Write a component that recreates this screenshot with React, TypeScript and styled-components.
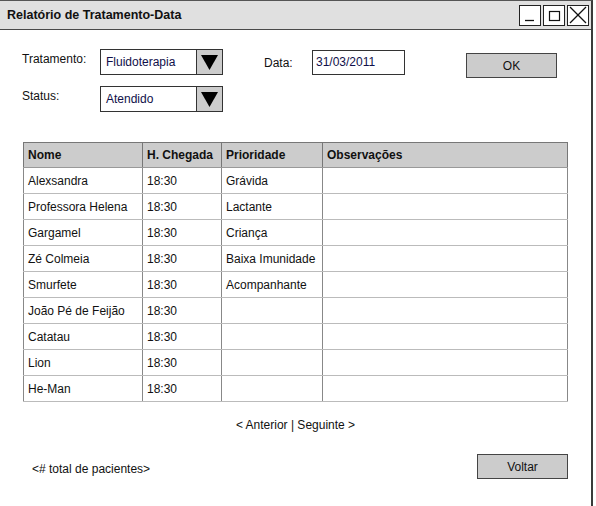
import React from "react";
import styled, { createGlobalStyle } from "styled-components";

const Global = createGlobalStyle`
  html, body { margin: 0; padding: 0; background: #fff; overflow: hidden; }
  body { font-family: "Liberation Sans", Arial, sans-serif; color: #111; }
`;

const Window = styled.div`
  width: 593px;
  height: 506px;
  border-right: 2px solid #3a3a3a;
  border-top: 1px solid #555;
  box-sizing: border-box;
  display: flex;
  flex-direction: column;
  background: #fff;
`;

const TitleBar = styled.div`
  height: 28px;
  background: #e0e0e0;
  border-bottom: 1px solid #4a4a4a;
  display: flex;
  align-items: center;
  justify-content: space-between;
  padding: 0 2px 0 7px;
`;

const Title = styled.span`
  font-size: 12.5px;
  font-weight: bold;
  color: #111;
`;

const Controls = styled.div`
  display: flex;
  gap: 2px;
`;

const CtrlBtn = styled.div`
  width: 22px;
  height: 21px;
  border: 1px solid #222;
  background: #fff;
  box-sizing: border-box;
  display: flex;
  align-items: center;
  justify-content: center;
`;

const Content = styled.div`
  padding: 19px 0 0 22px;
  display: flex;
  flex-direction: column;
`;

const Form = styled.div`
  display: grid;
  grid-template-columns: 78px 123px 41px 48px 93px 61px 91px;
  grid-template-rows: 26px 26px;
  row-gap: 11px;
`;

const Label = styled.span<{ $col: number; $row: number; $dy?: number }>`
  grid-column: ${(p) => p.$col};
  grid-row: ${(p) => p.$row};
  font-size: 12px;
  align-self: start;
  padding-top: ${(p) => p.$dy ?? 3}px;
`;

const Select = styled.div<{ $row: number }>`
  grid-column: 2;
  grid-row: ${(p) => p.$row};
  display: flex;
  border: 1px solid #333;
  height: 26px;
  box-sizing: border-box;
  background: #fff;
`;

const SelectText = styled.span`
  flex: 1;
  font-size: 12px;
  color: #10104a;
  padding-left: 5px;
  display: flex;
  align-items: center;
`;

const Arrow = styled.div`
  width: 25px;
  background: #cccccc;
  border-left: 1px solid #333;
  display: flex;
  align-items: center;
  justify-content: center;
`;

const Input = styled.div`
  grid-column: 5;
  grid-row: 1;
  height: 25px;
  margin-top: 1px;
  border: 1px solid #333;
  box-sizing: border-box;
  font-size: 12px;
  color: #10104a;
  padding: 4px 0 0 3px;
`;

const Button = styled.div<{ $w: number }>`
  width: ${(p) => p.$w}px;
  height: 25px;
  background: #cccccc;
  border: 1.5px solid #444;
  box-sizing: border-box;
  font-size: 12px;
  display: flex;
  align-items: center;
  justify-content: center;
  color: #111;
`;

const OkCell = styled.div`
  grid-column: 7;
  grid-row: 1;
  margin-top: 4px;
`;

const Table = styled.table`
  margin-top: 30px;
  margin-left: 1px;
  width: 545px;
  border-collapse: collapse;
  font-size: 12px;
  table-layout: fixed;
`;

const Th = styled.th<{ $w?: number }>`
  ${(p) => (p.$w ? `width: ${p.$w}px;` : "")}
  background: #cccccc;
  height: 25px;
  text-align: left;
  font-weight: bold;
  padding: 0 0 0 4px;
  border: 1px solid #777;
  border-bottom: 1px solid #999;
  box-sizing: border-box;
`;

const Td = styled.td`
  height: 26px;
  padding: 0 0 0 4px;
  border-left: 1px solid #888;
  border-right: 1px solid #888;
  border-bottom: 1px solid #bbb;
  box-sizing: border-box;
  white-space: nowrap;
  overflow: hidden;
`;

const Pager = styled.div`
  width: 545px;
  margin-left: 1px;
  margin-top: 16px;
  text-align: center;
  font-size: 12px;
  color: #111;
`;

const Footer = styled.div`
  width: 546px;
  display: flex;
  justify-content: space-between;
  align-items: center;
  margin-top: 22px;
  padding-left: 10px;
  box-sizing: border-box;
`;

const Total = styled.span`
  font-size: 12px;
  padding-top: 5px;
`;

const Triangle = () => (
  <svg width="17" height="16" viewBox="0 0 17 16">
    <polygon points="0,1 17,1 8.5,16" fill="#000" />
  </svg>
);

const rows: [string, string, string][] = [
  ["Alexsandra", "18:30", "Grávida"],
  ["Professora Helena", "18:30", "Lactante"],
  ["Gargamel", "18:30", "Criança"],
  ["Zé Colmeia", "18:30", "Baixa Imunidade"],
  ["Smurfete", "18:30", "Acompanhante"],
  ["João Pé de Feijão", "18:30", ""],
  ["Catatau", "18:30", ""],
  ["Lion", "18:30", ""],
  ["He-Man", "18:30", ""],
];

export default function App() {
  return (
    <>
      <Global />
      <Window>
        <TitleBar>
          <Title>Relatório de Tratamento-Data</Title>
          <Controls>
            <CtrlBtn>
              <svg width="14" height="14" viewBox="0 0 14 14">
                <line x1="2" y1="12.5" x2="11" y2="12.5" stroke="#111" strokeWidth="1.3" />
              </svg>
            </CtrlBtn>
            <CtrlBtn>
              <svg width="14" height="14" viewBox="0 0 14 14">
                <rect x="2.5" y="3.5" width="10" height="9" fill="none" stroke="#111" strokeWidth="1.2" />
              </svg>
            </CtrlBtn>
            <CtrlBtn>
              <svg width="18" height="18" viewBox="0 0 18 18">
                <line x1="1" y1="1" x2="17" y2="17" stroke="#111" strokeWidth="1.2" />
                <line x1="17" y1="1" x2="1" y2="17" stroke="#111" strokeWidth="1.2" />
              </svg>
            </CtrlBtn>
          </Controls>
        </TitleBar>
        <Content>
          <Form>
            <Label $col={1} $row={1} $dy={3}>Tratamento:</Label>
            <Select $row={1}>
              <SelectText>Fluidoterapia</SelectText>
              <Arrow><Triangle /></Arrow>
            </Select>
            <Label $col={4} $row={1} $dy={7}>Data:</Label>
            <Input>31/03/2011</Input>
            <OkCell><Button $w={91}>OK</Button></OkCell>
            <Label $col={1} $row={2} $dy={3}>Status:</Label>
            <Select $row={2}>
              <SelectText>Atendido</SelectText>
              <Arrow><Triangle /></Arrow>
            </Select>
          </Form>
          <Table>
            <thead>
              <tr>
                <Th $w={119}>Nome</Th>
                <Th $w={79}>H. Chegada</Th>
                <Th $w={101}>Prioridade</Th>
                <Th>Observações</Th>
              </tr>
            </thead>
            <tbody>
              {rows.map((r) => (
                <tr key={r[0]}>
                  <Td>{r[0]}</Td>
                  <Td>{r[1]}</Td>
                  <Td>{r[2]}</Td>
                  <Td />
                </tr>
              ))}
            </tbody>
          </Table>
          <Pager>&lt; Anterior | Seguinte &gt;</Pager>
          <Footer>
            <Total>&lt;# total de pacientes&gt;</Total>
            <Button $w={91}>Voltar</Button>
          </Footer>
        </Content>
      </Window>
    </>
  );
}
